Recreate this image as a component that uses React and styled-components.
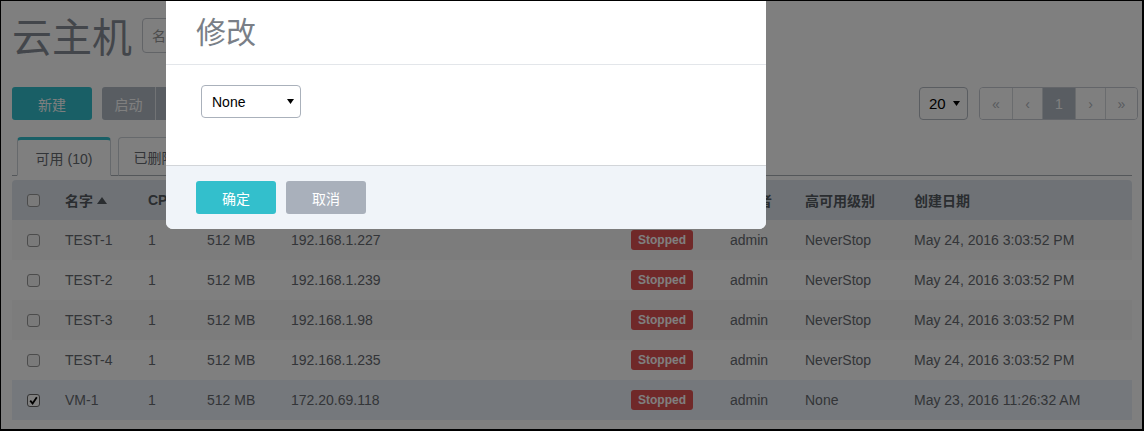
import React from "react";
import styled, { createGlobalStyle } from "styled-components";

const ROWS = [
  { name: "TEST-1", cpu: 1, mem: "512 MB", ip: "192.168.1.227", owner: "admin", ha: "NeverStop", date: "May 24, 2016 3:03:52 PM" },
  { name: "TEST-2", cpu: 1, mem: "512 MB", ip: "192.168.1.239", owner: "admin", ha: "NeverStop", date: "May 24, 2016 3:03:52 PM" },
  { name: "TEST-3", cpu: 1, mem: "512 MB", ip: "192.168.1.98", owner: "admin", ha: "NeverStop", date: "May 24, 2016 3:03:52 PM" },
  { name: "TEST-4", cpu: 1, mem: "512 MB", ip: "192.168.1.235", owner: "admin", ha: "NeverStop", date: "May 24, 2016 3:03:52 PM" },
  { name: "VM-1", cpu: 1, mem: "512 MB", ip: "172.20.69.118", owner: "admin", ha: "None", date: "May 23, 2016 11:26:32 AM", checked: true }
];

const GlobalStyle = createGlobalStyle`
  html, body {
    margin: 0;
    padding: 0;
    background: #fff;
  }
  body {
    font-family: "Liberation Sans", Arial, "Noto Sans CJK SC", sans-serif;
    font-size: 14px;
    color: #666a70;
  }
`;

const Caret = ({ size = 7, color = "#000" }) => (
  <svg width={size} height={size * 0.7} viewBox="0 0 10 7">
    <path d="M0 0 L10 0 L5 7 Z" fill={color} />
  </svg>
);

const SortUp = () => (
  <svg width="10" height="7" viewBox="0 0 10 7">
    <path d="M0 7 L10 7 L5 0 Z" fill="#555a61" />
  </svg>
);

const CheckMark = () => (
  <svg width="9" height="9" viewBox="0 0 9 9">
    <path d="M1.2 4.6 L3.6 7.4 L7.8 1.2" stroke="#000" strokeWidth="1.8" fill="none" />
  </svg>
);

const App = () => {
  return (
    <>
      <GlobalStyle />
      <Frame>
        <Page>
          <TitleRow>
            <Title>云主机</Title>
            <SearchBox>名字/IP</SearchBox>
          </TitleRow>

          <Toolbar>
            <Button $kind="primary">新建</Button>
            <ButtonGroup>
              <GroupButton>启动</GroupButton>
              <GroupButton>停止</GroupButton>
              <GroupButton>重启</GroupButton>
              <GroupButton>删除</GroupButton>
            </ButtonGroup>
            <Spacer />
            <PageSize>
              20 <Caret />
            </PageSize>
            <Pager>
              <PageCell $w={32}>«</PageCell>
              <PageCell $w={29}>‹</PageCell>
              <PageCell $w={32} $active>1</PageCell>
              <PageCell $w={29}>›</PageCell>
              <PageCell $w={31}>»</PageCell>
            </Pager>
          </Toolbar>

          <TabBar>
            <Tab $w={94} $active>可用 (10)</Tab>
            <Tab $w={94}>已删除 (0)</Tab>
          </TabBar>

          <Table>
            <HeadRow>
              <BoxCell>
                <Box />
              </BoxCell>
              <Cell>
                名字 <SortUp />
              </Cell>
              <Cell>CPU</Cell>
              <Cell>内存</Cell>
              <Cell>IP地址</Cell>
              <Cell>状态</Cell>
              <Cell>所有者</Cell>
              <Cell>高可用级别</Cell>
              <Cell>创建日期</Cell>
            </HeadRow>
            {ROWS.map((row, i) => (
              <Row key={row.name} $striped={i % 2 === 0} $selected={row.checked}>
                <BoxCell>
                  <Box $checked={row.checked}>{row.checked && <CheckMark />}</Box>
                </BoxCell>
                <Cell>{row.name}</Cell>
                <Cell>{row.cpu}</Cell>
                <Cell>{row.mem}</Cell>
                <Cell>{row.ip}</Cell>
                <Cell>
                  <Badge>Stopped</Badge>
                </Cell>
                <Cell>{row.owner}</Cell>
                <Cell>{row.ha}</Cell>
                <Cell>{row.date}</Cell>
              </Row>
            ))}
          </Table>
        </Page>

        <Overlay />

        <Modal>
          <ModalHeader>修改</ModalHeader>
          <ModalBody>
            <Select>
              None <Caret />
            </Select>
          </ModalBody>
          <ModalFooter>
            <Button $kind="primary">确定</Button>
            <Button $kind="muted">取消</Button>
          </ModalFooter>
        </Modal>
      </Frame>
    </>
  );
};

const Frame = styled.div`
  position: relative;
  width: 1144px;
  height: 431px;
  box-sizing: border-box;
  border-style: solid;
  border-color: #000;
  border-width: 1px 2px 2px 1px;
  overflow: hidden;
  background: #fff;
`;

const Page = styled.div`
  padding: 11px 4px 0 11px;
`;

const TitleRow = styled.div`
  display: flex;
  align-items: center;
  gap: 10px;
  height: 46px;
`;

const Title = styled.h1`
  margin: 0;
  font-family: "Noto Sans CJK SC", sans-serif;
  font-size: 40px;
  font-weight: normal;
  line-height: 46px;
  color: #878d96;
`;

const SearchBox = styled.div`
  box-sizing: border-box;
  width: 220px;
  height: 35px;
  display: flex;
  align-items: center;
  padding: 0 9px;
  border: 1px solid #c4c8ce;
  border-radius: 4px;
  color: #999;
`;

const Toolbar = styled.div`
  display: flex;
  align-items: center;
  height: 33px;
  margin-top: 29px;
`;

const Button = styled.button`
  width: 80px;
  height: 33px;
  border: 0;
  border-radius: 3px;
  color: #fff;
  font-family: "Noto Sans CJK SC", sans-serif;
  font-size: 14px;
  padding: 0;
  background: ${(p) => (p.$kind === "primary" ? "#33bfcc" : "#a9b0bb")};
`;

const ButtonGroup = styled.div`
  display: flex;
  margin-left: 10px;
  border-radius: 3px;
  overflow: hidden;
`;

const GroupButton = styled.button`
  width: 54px;
  height: 33px;
  border: 0;
  border-right: 1px solid #e2e6ea;
  padding: 0;
  background: #b3bbc5;
  color: #fff;
  font-family: "Noto Sans CJK SC", sans-serif;
  font-size: 14px;
`;

const Spacer = styled.div`
  flex: 1;
`;

const PageSize = styled.div`
  box-sizing: border-box;
  width: 49px;
  height: 33px;
  display: flex;
  align-items: center;
  justify-content: space-between;
  padding: 0 7px 0 9px;
  border: 1px solid #b4bac2;
  border-radius: 4px;
  color: #000;
  font-size: 15px;
`;

const Pager = styled.div`
  display: flex;
  height: 33px;
  margin-left: 11px;
  border: 1px solid #c6cbd2;
  border-radius: 4px;
  overflow: hidden;
  box-sizing: border-box;
`;

const PageCell = styled.div`
  width: ${(p) => p.$w}px;
  display: flex;
  align-items: center;
  justify-content: center;
  color: ${(p) => (p.$active ? "#fff" : "#b0b5bc")};
  background: ${(p) => (p.$active ? "#b3bbc5" : "#fff")};
  font-size: 14px;
  & + & {
    border-left: 1px solid #d4d8dd;
  }
`;

const TabBar = styled.div`
  display: flex;
  gap: 7px;
  height: 38px;
  margin: 17px 6px 0 0;
  padding-left: 5px;
  border-bottom: 1px solid #a9aeb5;
`;

const Tab = styled.div`
  box-sizing: border-box;
  width: ${(p) => p.$w}px;
  height: 39px;
  display: flex;
  align-items: center;
  justify-content: center;
  background: #fff;
  border: 1px solid #cdd2d8;
  border-top: ${(p) => (p.$active ? "3px solid #33bfcc" : "1px solid #cdd2d8")};
  border-bottom: 1px solid ${(p) => (p.$active ? "#fff" : "#a9aeb5")};
  border-radius: 4px 4px 0 0;
  color: #666a70;
  font-size: 14px;
`;

const Table = styled.div`
  margin: 4px 6px 0 0;
`;

const Row = styled.div`
  display: grid;
  grid-template-columns: 53px 83px 59px 84px 340px 99px 75px 109px 1fr;
  align-items: center;
  height: 40px;
  background: ${(p) => (p.$selected ? "#ebf1f8" : p.$striped ? "#f8f8f8" : "#fff")};
`;

const HeadRow = styled(Row)`
  background: #dee5ed;
  border-radius: 4px 4px 0 0;
  font-weight: bold;
  color: #555a61;
`;

const Cell = styled.div`
  display: flex;
  align-items: center;
  gap: 4px;
  white-space: nowrap;
`;

const BoxCell = styled.div`
  padding-left: 15px;
  display: flex;
  align-items: center;
`;

const Box = styled.span`
  box-sizing: border-box;
  width: 13px;
  height: 13px;
  display: flex;
  align-items: center;
  justify-content: center;
  border: 1px solid ${(p) => (p.$checked ? "#666" : "#999")};
  border-radius: 3px;
  background: ${(p) => (p.$checked ? "#fff" : "#f4f4f4")};
`;

const Badge = styled.span`
  display: inline-block;
  height: 20px;
  line-height: 20px;
  padding: 0 7px;
  border-radius: 3px;
  background: #e05252;
  color: #fff;
  font-size: 12px;
  font-weight: bold;
`;

const Overlay = styled.div`
  position: absolute;
  inset: 0;
  background: rgba(0, 0, 0, 0.5);
`;

const Modal = styled.div`
  position: absolute;
  top: -6px;
  left: 165px;
  width: 600px;
  background: #fff;
  border-radius: 7px;
  overflow: hidden;
`;

const ModalHeader = styled.div`
  height: 69px;
  display: flex;
  align-items: center;
  padding-left: 30px;
  border-bottom: 1px solid #e3e6ea;
  font-family: "Noto Sans CJK SC", sans-serif;
  font-size: 30px;
  color: #7a7f87;
`;

const ModalBody = styled.div`
  box-sizing: border-box;
  height: 100px;
  padding: 20px 35px;
`;

const Select = styled.div`
  box-sizing: border-box;
  width: 100px;
  height: 33px;
  display: flex;
  align-items: center;
  justify-content: space-between;
  padding: 0 6px 0 10px;
  border: 1px solid #aab1bb;
  border-radius: 4px;
  color: #000;
  font-size: 14px;
`;

const ModalFooter = styled.div`
  display: flex;
  gap: 10px;
  padding: 15px 30px;
  border-top: 1px solid #d2d5d9;
  background: #f0f4f9;
`;

export default App;
